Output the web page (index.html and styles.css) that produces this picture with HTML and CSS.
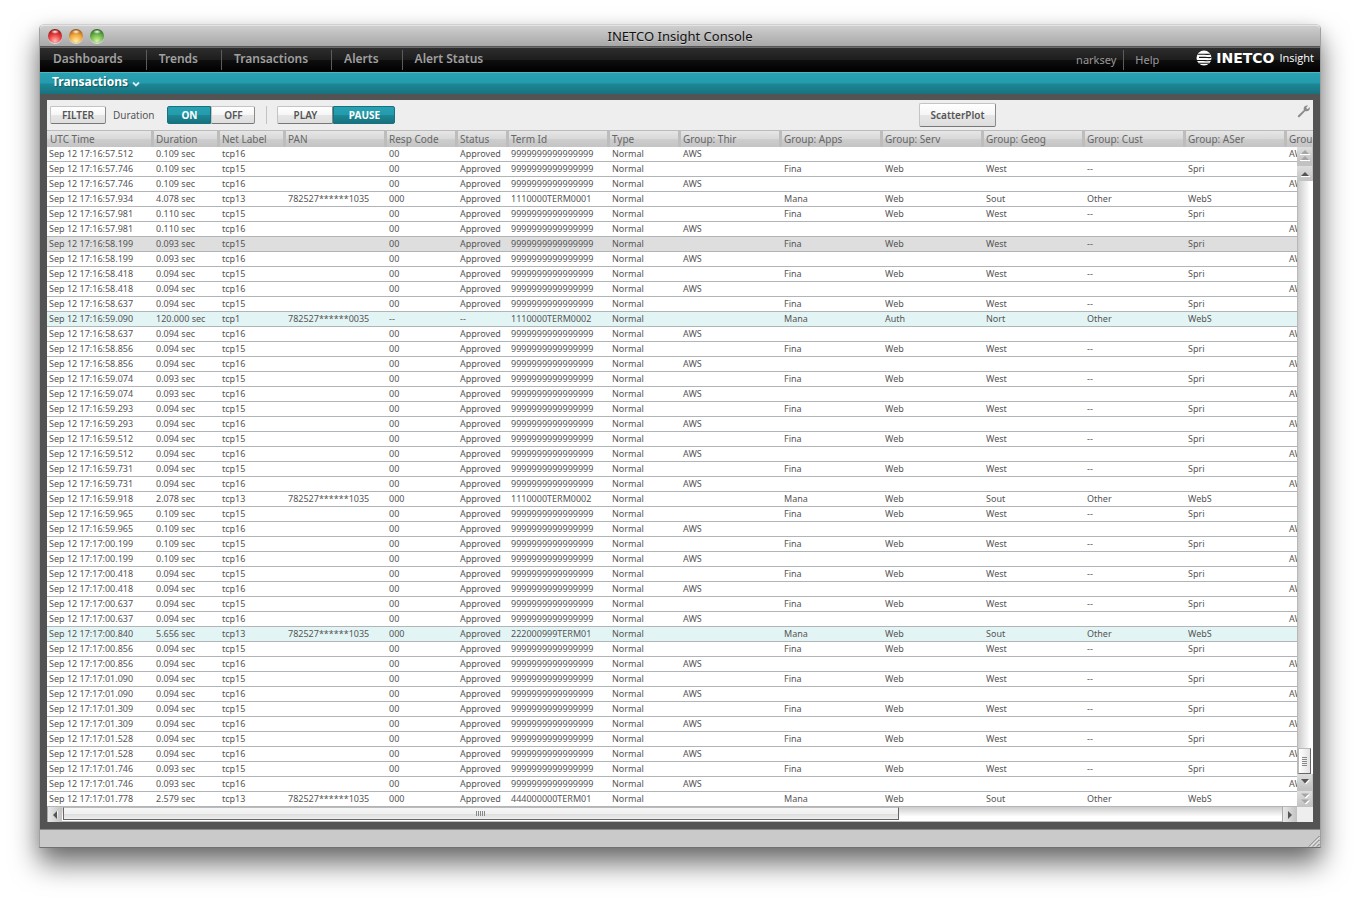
FILE: index.html
```html
<!DOCTYPE html>
<html lang="en">
<head>
<meta charset="utf-8">
<title>INETCO Insight Console</title>
<link rel="stylesheet" href="styles.css">
</head>
<body>
<div class="window">
  <header class="titlebar">
    <div class="lights">
      <button class="light light-red" aria-label="Close"></button>
      <button class="light light-amber" aria-label="Minimize"></button>
      <button class="light light-green" aria-label="Zoom"></button>
    </div>
    <h1 class="title">INETCO Insight Console</h1>
  </header>
  <nav class="nav">
    <a class="nav-item" href="#">Dashboards</a>
    <a class="nav-item" href="#">Trends</a>
    <a class="nav-item" href="#">Transactions</a>
    <a class="nav-item" href="#">Alerts</a>
    <a class="nav-item" href="#">Alert Status</a>
    <div class="account">
      <a class="account-item" href="#">narksey</a>
      <a class="account-item" href="#">Help</a>
    </div>
    <div class="brand">
      <svg class="brand-mark" viewBox="0 0 16 16" width="16" height="16" aria-hidden="true">
        <clipPath id="disc"><circle cx="8" cy="8" r="7.500"/></clipPath>
        <g clip-path="url(#disc)">
          <rect width="16" height="16" fill="#fff"/>
          <path d="M0 4.200h6c3 0 6 .8 10-.4M3 7.400h6c2.500 0 4.500.6 7-.2M0 10.500h7c3 0 5 .6 9-.2M2 13.200h7c2 0 3 .3 5 0" fill="none" stroke="#161616" stroke-width="1.100"/>
        </g>
      </svg>
      <span class="brand-name">INETCO</span>
      <span class="brand-product">Insight</span>
    </div>
  </nav>
  <div class="section">
    <button class="section-button">Transactions
      <svg class="chevron" viewBox="0 0 8 6" width="8" height="6" aria-hidden="true"><path d="M1 1.500l3 3 3-3" fill="none" stroke="#d4eef2" stroke-width="1.800"/></svg>
    </button>
  </div>
  <main class="frame">
    <div class="panel">
      <div class="toolbar">
        <button class="btn btn-filter">FILTER</button>
        <span class="toolbar-label" id="duration-label">Duration</span>
        <div class="segment" role="group" aria-labelledby="duration-label">
          <button class="btn btn-active">ON</button>
          <button class="btn">OFF</button>
        </div>
        <div class="divider"></div>
        <div class="segment segment-wide" role="group" aria-label="Playback">
          <button class="btn">PLAY</button>
          <button class="btn btn-active">PAUSE</button>
        </div>
        <button class="btn btn-plot">ScatterPlot</button>
        <button class="tool" aria-label="Settings">
          <svg viewBox="0 0 13 13" width="13" height="13" aria-hidden="true"><path fill="#8c8c8c" d="M11.200.6 9.300 2.500l.3 1.100 1.200.3 1.900-1.800c.5 2-.6 3.900-2.600 4.200-.7.100-1.200 0-1.700-.2L2.600 12c-.9.800-2.300-.4-1.500-1.500L6.900 5C6 2.800 7.600-.2 11.200.6z"/></svg>
        </button>
      </div>
      <div class="view">
        <div class="grid-wrap">
          <table class="grid">
            <colgroup>
              <col class="c-time"><col class="c-dur"><col class="c-net"><col class="c-pan"><col class="c-resp"><col class="c-status"><col class="c-term"><col class="c-type">
              <col class="c-group" span="6"><col>
            </colgroup>
            <thead>
              <tr><th>UTC Time</th><th>Duration</th><th>Net Label</th><th>PAN</th><th>Resp Code</th><th>Status</th><th>Term Id</th><th>Type</th><th>Group: Thir</th><th>Group: Apps</th><th>Group: Serv</th><th>Group: Geog</th><th>Group: Cust</th><th>Group: ASer</th><th>Grou</th></tr>
            </thead>
            <tbody id="rows"></tbody>
          </table>
        </div>
        <div class="vbar">
          <button class="sb" aria-label="Page up"><svg viewBox="0 0 10 12" width="10" height="12"><path fill="#fff" d="M0 5h10v1H0zM0 11h10v1H0z"/><path fill="#a5a5a5" d="M1 5l4-4 4 4zM1 11l4-4 4 4z"/></svg></button>
          <button class="sb sb-line" aria-label="Scroll up"><svg viewBox="0 0 10 6" width="10" height="6"><path fill="#fff" d="M1 5h9v1H1z"/><path fill="#555" d="M1 5l4-4 4 4z"/></svg></button>
          <div class="vtrack"><div class="vthumb"><i class="grip"></i></div></div>
          <button class="sb" aria-label="Scroll down"><svg viewBox="0 0 10 6" width="10" height="6"><path fill="#fff" d="M2 1h8L6 5.500z"/><path fill="#555" d="M1 0h8L5 4.500z"/></svg></button>
          <button class="sb sb-last" aria-label="Page down"><svg viewBox="0 0 10 12" width="10" height="12"><path fill="#fff" d="M2 1.500h8l-4 4zM2 7.500h8l-4 4z"/><path fill="#a5a5a5" d="M1 .5h8l-4 4zM1 6.500h8l-4 4z"/></svg></button>
        </div>
        <div class="hbar">
          <button class="sb sb-side" aria-label="Scroll left"><svg viewBox="0 0 6 10" width="6" height="10"><path fill="#fff" d="M5 1h1v9z"/><path fill="#555" d="M5 1v8L1 5z"/></svg></button>
          <div class="htrack"><div class="hthumb"><i class="grip grip-h"></i></div></div>
          <button class="sb sb-side" aria-label="Scroll right"><svg viewBox="0 0 6 10" width="6" height="10"><path fill="#fff" d="M1 10l5-4.500z"/><path fill="#555" d="M1 1v8l4-4z"/></svg></button>
        </div>
      </div>
    </div>
  </main>
  <footer class="status">
    <svg class="resize" viewBox="0 0 12 12" width="12" height="12" aria-hidden="true"><path d="M1 11.500L11.500 1M5 11.500L11.500 5M9 11.500L11.500 9" stroke="#777" fill="none"/><path d="M2.200 11.500L11.500 2.200M6.200 11.500l5.300-5.300" stroke="#eee" fill="none"/></svg>
  </footer>
</div>
<script src="rows.js"></script>
</body>
</html>
```
FILE: styles.css
```css
* { box-sizing: border-box; }
body {
  margin: 0;
  padding: 24px 39px 54px;
  background: #fff;
  font-family: "Noto Sans", "Open Sans", sans-serif;
  color: #555;
}
button { font-family: inherit; padding: 0; border: 0; background: none; cursor: pointer; }
svg { display: block; flex: none; }

.window {
  border: 1px solid #a0a0a0;
  border-top-color: #d0d0d0;
  border-bottom-color: #707070;
  border-radius: 5px 5px 0 0;
  box-shadow: 0 16px 28px rgba(0, 0, 0, .55), 0 4px 16px rgba(0, 0, 0, .1);
}
.titlebar {
  display: grid;
  grid-template-columns: 1fr auto 1fr;
  align-items: center;
  height: 22px;
  padding: 0 8px;
  border-radius: 4px 4px 0 0;
  border-top: 1px solid #e4e4e4;
  border-bottom: 1px solid #555;
  background: linear-gradient(#cecece, #a8a8a8);
}
.lights { display: flex; gap: 7px; }
.light {
  width: 14px;
  height: 14px;
  border-radius: 50%;
  box-shadow: 0 1px 0 #ddd;
}
.light-red { background: radial-gradient(ellipse 4px 2px at 50% 20%, #fff, transparent), radial-gradient(circle at 50% 85%, #ffb8b8 0, #ee3f3f 45%, #5e0c0c 100%); }
.light-amber { background: radial-gradient(ellipse 4px 2px at 50% 20%, #fff, transparent), radial-gradient(circle at 50% 85%, #fff09a 0, #efa03a 50%, #6e3404 100%); }
.light-green { background: radial-gradient(ellipse 4px 2px at 50% 20%, #fff, transparent), radial-gradient(circle at 50% 85%, #d3f5a0 0, #68b148 50%, #17480e 100%); }
.title { margin: 0; font-size: 13px; line-height: 20px; font-weight: 400; color: #111; text-shadow: 0 1px 0 #ccc; }

.nav {
  display: flex;
  height: 25px;
  padding: 2px 6px 2px 1px;
  border-top: 1px solid #6a6a6a;
  background: linear-gradient(#2d2d2d, #1d1d1d 50%, #0e0e0e 51%, #000);
}
.nav-item {
  padding: 0 23px 0 12px;
  border-right: 1px solid #5c5c5c;
  font-size: 12px;
  line-height: 18px;
  font-weight: 600;
  color: #a0a0a0;
  text-decoration: none;
}
.nav-item:nth-child(5) { border-right: 0; }
.account { display: flex; margin-left: auto; }
.account-item { padding: 0 7px; font-size: 11px; line-height: 20px; color: #999; text-decoration: none; }
.account-item + .account-item { padding-left: 11px; border-left: 1px solid #5c5c5c; }
.brand { display: flex; align-items: center; margin-left: 30px; height: 16px; color: #fff; }
.brand-name { margin-left: 4px; font: 700 14px/16px "DejaVu Sans", sans-serif; }
.brand-product { margin-left: 5px; font: 400 11px/16px "Open Sans", sans-serif; }

.section {
  height: 22px;
  padding-left: 12px;
  border-top: 1px solid #4fb6c4;
  background: linear-gradient(#28a1b2, #239bac 48%, #1d8795 52%, #17727f);
}
.section-button {
  display: flex;
  align-items: center;
  gap: 4px;
  font-size: 12px;
  line-height: 18px;
  font-weight: 700;
  color: #fff;
  text-shadow: 1px 1px 1px #0d5a66;
}
.chevron { margin-top: 3px; }

.frame { padding: 6px 7px 7px; background: #535353; }
.panel { background: #eee; }
.toolbar { display: flex; align-items: center; height: 30px; padding: 0 3px; }
.btn {
  height: 18px;
  border: 1px solid #c4c4c4;
  border-right-color: #8a8a8a;
  border-bottom-color: #777;
  border-radius: 2px;
  background: linear-gradient(#fff, #f6f6f6 48%, #e6e6e6 52%, #dedede);
  font-size: 10px;
  line-height: 14px;
  font-weight: 600;
  color: #555;
}
.btn-filter { width: 56px; }
.toolbar-label { margin: 0 13px 0 7px; font-size: 10px; line-height: 14px; }
.segment { display: flex; }
.segment .btn { width: 44px; }
.segment-wide .btn { width: 56px; }
.segment-wide .btn-active { width: 62px; }
.segment .btn:first-child { border-radius: 2px 0 0 2px; }
.segment .btn:last-child { border-radius: 0 2px 2px 0; }
.segment .btn-active {
  border-color: #17727f;
  background: linear-gradient(#28a1b2, #239bac 48%, #1d8795 52%, #17727f);
  color: #fff;
  font-weight: 700;
}
.divider { width: 1px; height: 18px; margin: 0 10px 0 11px; background: #bdc5c5; }
.btn-plot { width: 77px; height: 24px; margin-left: auto; }
.tool { margin: 0 0 8px 301px; }

.view { display: grid; grid-template-columns: minmax(0, 1fr) 16px; }
.grid-wrap { grid-area: 1 / 1 / 2 / 3; overflow: hidden; background: #fff; }
.grid { width: 100%; table-layout: fixed; border-collapse: separate; border-spacing: 0; }
.c-time { width: 107px; }
.c-dur, .c-net { width: 66px; }
.c-pan, .c-term, .c-group { width: 101px; }
.c-resp, .c-type { width: 71px; }
.c-status { width: 51px; }
.grid th, .grid td {
  padding: 0 0 0 2px;
  overflow: hidden;
  white-space: nowrap;
  text-align: left;
  font-weight: 400;
}
.grid th {
  height: 17px;
  border-top: 1px solid #bbb;
  border-right: 3px solid #bdbdbd;
  background: linear-gradient(#e6e6e6, #d8d8d8 50%, #cdcdcd 52%, #c4c4c4);
  font-size: 10px;
  line-height: 16px;
  color: #666;
}
.grid td {
  height: 15px;
  border-bottom: 1px solid #b2b5b8;
  font-size: 9px;
  line-height: 14px;
  color: #555;
}
.grid th:first-child { padding-left: 3px; }
.grid th:last-child { border-right: 0; }
.row-hover td { background: #dedede; }
.row-slow td { background: #e3f4f4; }

.vbar {
  grid-area: 1 / 2;
  display: flex;
  flex-direction: column;
  margin-top: 17px;
  background: #c2c2c2;
}
.sb {
  display: flex;
  align-items: center;
  justify-content: center;
  flex: none;
  width: 15px;
  height: 15px;
  background: linear-gradient(#dedede, #c2c2c2);
}
.sb-line { margin-top: 4px; }
.sb-last { height: 16px; margin-top: 2px; }
.vtrack {
  flex: 1;
  display: flex;
  align-items: flex-end;
  border-left: 1px solid #b8b8b8;
  background: linear-gradient(90deg, #ccc, #fff 80%);
}
.vthumb, .hthumb {
  display: flex;
  justify-content: center;
  border: 1px solid #bbb;
  border-right-color: #666;
  border-bottom: 1px solid #666;
}
.vthumb { align-items: center; width: 13px; height: 26px; background: linear-gradient(90deg, #fff, #e2e2e2); }
.grip { width: 5px; height: 9px; background: repeating-linear-gradient(#888 0 1px, transparent 1px 2px); }
.grip-h { width: 9px; height: 5px; margin-top: 3px; background: repeating-linear-gradient(90deg, #888 0 1px, transparent 1px 2px); }
.hbar { display: flex; height: 15px; background: #c8c8c8; }
.sb-side { border-left: 1px solid #aaa; background: linear-gradient(90deg, #e8e8e8, #c2c2c2); }
.htrack { flex: 1; background: linear-gradient(#ccc, #fff 70%); border-bottom: 1px solid #bbb; }
.hthumb { width: 68.500%; height: 13px; margin-left: 1px; border-left-color: #666; background: linear-gradient(#f6f6f6, #f0f0f0 50%, #dcdcdc 52%, #eee); }

.status {
  display: flex;
  justify-content: flex-end;
  align-items: flex-end;
  height: 18px;
  border-top: 1px solid #888;
  background: #cacaca;
}
```
FILE: rows.js
```js
const aws = ["", "", "", "", "", "AWS"];
const fina = ["Fina", "Web", "West", "--", "Spri", ""];
const mana = ["Mana", "Web", "Sout", "Other", "WebS", ""];
const auth = ["Mana", "Auth", "Nort", "Other", "WebS", ""];

// time | duration | net label, then for card traffic: pan | response | terminal | highlight
const log = `16:57.512|0.109|16
16:57.746|0.109|15
16:57.746|0.109|16
16:57.934|4.078|13|782527******1035|000|1110000TERM0001
16:57.981|0.110|15
16:57.981|0.110|16
16:58.199|0.093|15||||row-hover
16:58.199|0.093|16
16:58.418|0.094|15
16:58.418|0.094|16
16:58.637|0.094|15
16:59.090|120.000|1|782527******0035|--|1110000TERM0002|row-slow
16:58.637|0.094|16
16:58.856|0.094|15
16:58.856|0.094|16
16:59.074|0.093|15
16:59.074|0.093|16
16:59.293|0.094|15
16:59.293|0.094|16
16:59.512|0.094|15
16:59.512|0.094|16
16:59.731|0.094|15
16:59.731|0.094|16
16:59.918|2.078|13|782527******1035|000|1110000TERM0002
16:59.965|0.109|15
16:59.965|0.109|16
17:00.199|0.109|15
17:00.199|0.109|16
17:00.418|0.094|15
17:00.418|0.094|16
17:00.637|0.094|15
17:00.637|0.094|16
17:00.840|5.656|13|782527******1035|000|222000999TERM01|row-slow
17:00.856|0.094|15
17:00.856|0.094|16
17:01.090|0.094|15
17:01.090|0.094|16
17:01.309|0.094|15
17:01.309|0.094|16
17:01.528|0.094|15
17:01.528|0.094|16
17:01.746|0.093|15
17:01.746|0.093|16
17:01.778|2.579|13|782527******1035|000|444000000TERM01`;

const groups = { 16: aws, 15: fina, 13: mana, 1: auth };
const body = document.getElementById("rows");
for (const line of log.split("\n")) {
  const [time, duration, net, pan = "", resp, term, mark] = line.split("|");
  const cells = [
    "Sep 12 17:" + time,
    duration + " sec",
    "tcp" + net,
    pan,
    resp || "00",
    resp === "--" ? "--" : "Approved",
    term || "9999999999999999",
    "Normal",
    net === "16" ? "AWS" : "",
    ...groups[net],
  ];
  const row = body.insertRow();
  if (mark) row.className = mark;
  for (const text of cells) row.insertCell().textContent = text;
}
```
